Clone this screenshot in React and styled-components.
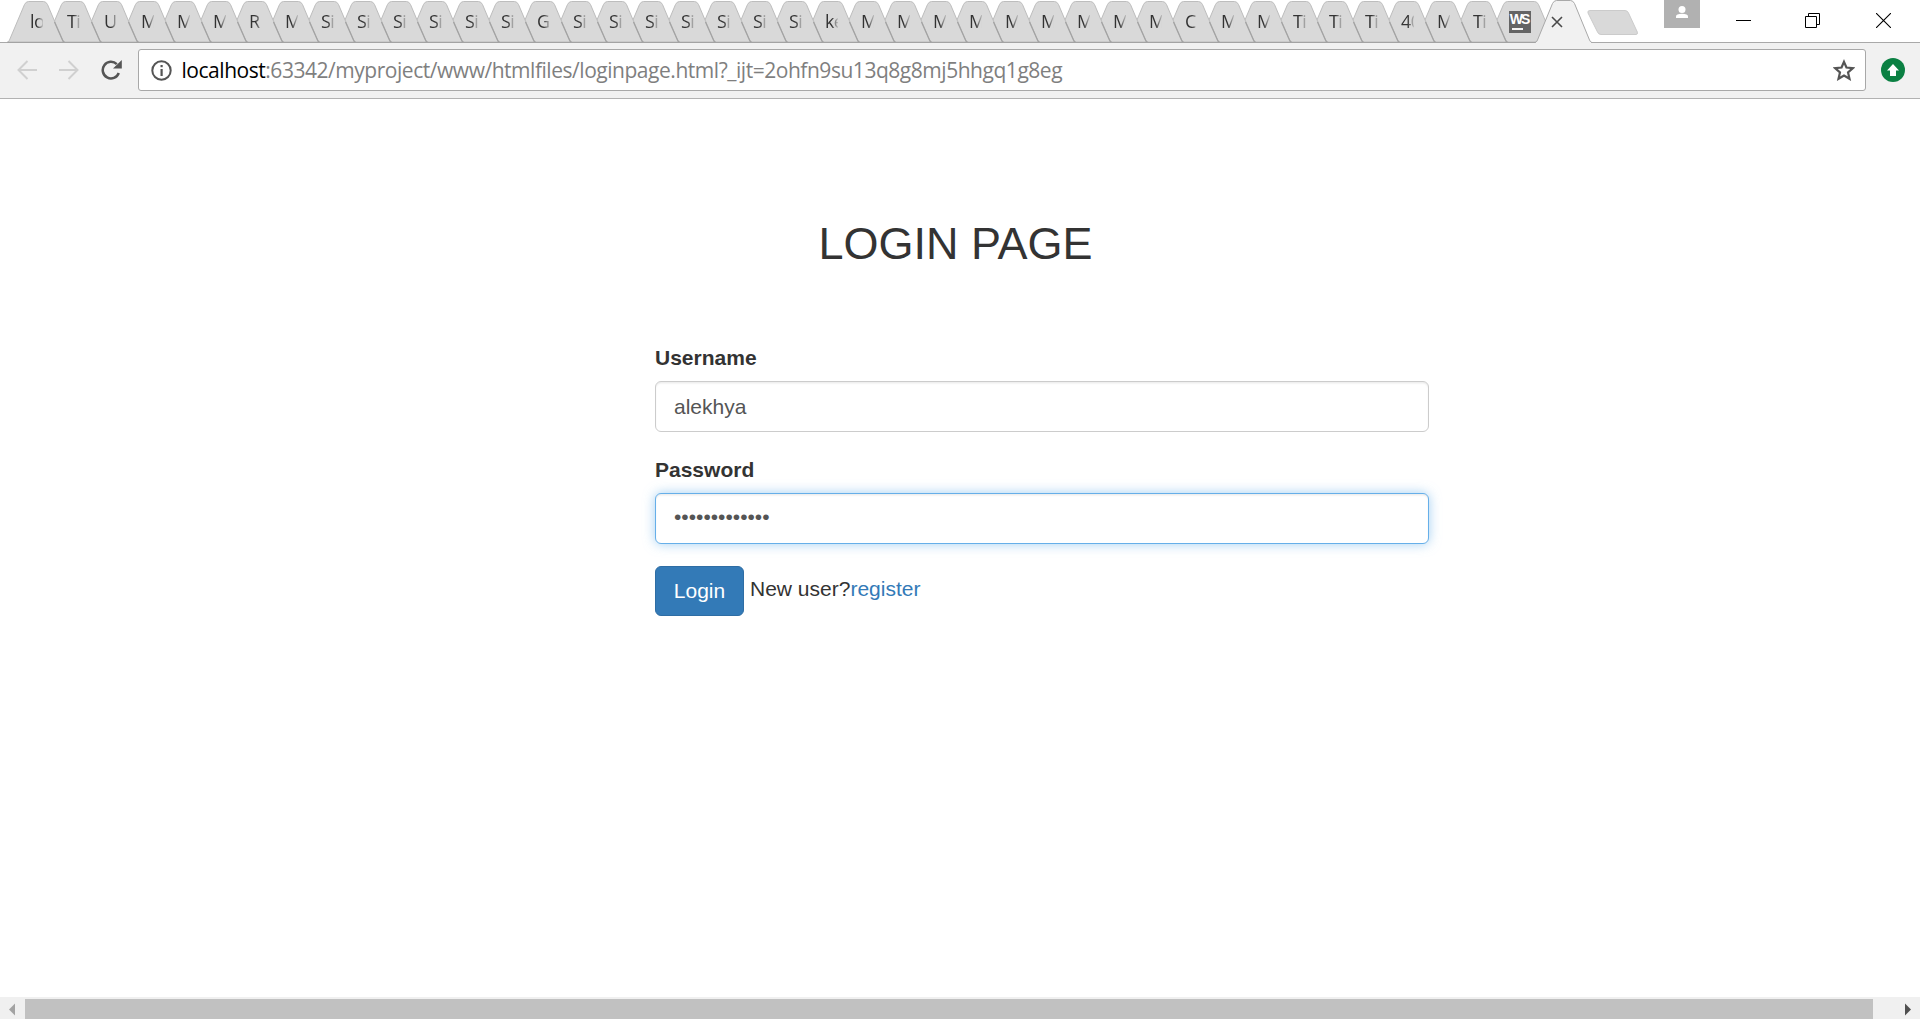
import React from "react";
import styled, { createGlobalStyle } from "styled-components";

const Global = createGlobalStyle`
  * { box-sizing: border-box; }
  html, body { margin: 0; padding: 0; background: #fff; overflow: hidden; }
`;

const Window = styled.div`
  width: 1920px;
  height: 1019px;
  display: flex;
  flex-direction: column;
  background: #fff;
  font-family: "Liberation Sans", Arial, sans-serif;
  font-size: 21px;
  color: #333;
`;

const TitleBar = styled.header`
  height: 43px;
  flex: none;
  display: flex;
  align-items: flex-start;
  border-bottom: 1px solid #a9a9a9;
`;

const TabStrip = styled.div`
  display: flex;
  height: 43px;
  padding-left: 7px;
  flex: none;
`;

const TabBox = styled.div`
  display: grid;
  flex: none;
  width: ${(p) => p.$width}px;
  height: 43px;
  margin-right: ${(p) => p.$pitch - p.$width}px;
  z-index: ${(p) => p.$z};
  position: relative;
  > * { grid-area: 1 / 1; }
`;

const TabLabel = styled.span`
  margin: 9px 0 0 23px;
  width: 13px;
  height: 24px;
  overflow: hidden;
  white-space: nowrap;
  font: 18px/24px "Open Sans", "Noto Sans", sans-serif;
  letter-spacing: -0.6px;
  color: #333;
  mask-image: linear-gradient(90deg, #000 50%, transparent 108%);
`;

const Favicon = styled.span`
  margin: 11px 0 0 23px;
  width: 22px;
  height: 22px;
  background: #646464;
  color: #fff;
  font: bold 14px/16px "Liberation Sans", Arial, sans-serif;
  letter-spacing: -2px;
  text-indent: -2px;
  text-align: center;
  &::after {
    content: "";
    display: block;
    width: 11px;
    height: 2px;
    margin: 1px 0 0 3px;
    background: #f4f4f4;
  }
`;

const TabClose = styled.svg`
  margin: 16px 0 0 16px;
`;

const NewTab = styled.svg`
  flex: none;
  margin: 10px 0 0 -5px;
`;

const WindowControls = styled.div`
  display: flex;
  align-items: flex-start;
  margin-left: auto;
  svg { display: block; }
`;

const Account = styled.div`
  width: 36px;
  height: 28px;
  background: #b1b1b1;
  margin-right: 36px;
`;

const ControlIcon = styled.svg`
  margin: ${(p) => p.$top}px ${(p) => p.$right}px 0 0;
`;

const Toolbar = styled.div`
  height: 56px;
  flex: none;
  display: flex;
  align-items: flex-start;
  padding: 6px 14px 0 17px;
  background: #f1f1f1;
  border-bottom: 1px solid #b2b2b2;
`;

const NavIcon = styled.svg`
  flex: none;
  margin: 11px ${(p) => p.$right}px 0 0;
`;

const AddressBar = styled.div`
  flex: none;
  width: 1728px;
  height: 42px;
  display: flex;
  align-items: center;
  padding: 0 10px 0 12px;
  background: #fff;
  border: 1px solid #a8a8a8;
  border-radius: 3px;
`;

const Url = styled.span`
  margin-left: 9.5px;
  flex: 1;
  font: 21px/40px "Open Sans", "Noto Sans", sans-serif;
  letter-spacing: -0.465px;
  color: #7f7f7f;
  white-space: nowrap;
  b { font-weight: 400; color: #000; }
`;

const UpdateIcon = styled.svg`
  flex: none;
  margin: 9px 0 0 15px;
`;

const Page = styled.main`
  flex: 1;
  display: flex;
  flex-direction: column;
  align-items: flex-start;
  padding: 120px 0 0 655px;
`;

const Heading = styled.h2`
  width: 601px;
  margin: 0 0 74px;
  text-align: center;
  font-size: 45px;
  line-height: 50px;
  font-weight: 400;
  color: #333;
`;

const Field = styled.div`
  display: flex;
  flex-direction: column;
  margin-bottom: ${(p) => p.$gap}px;
`;

const Label = styled.label`
  font-weight: 700;
  line-height: 30px;
  margin-bottom: 8px;
`;

const Input = styled.div`
  width: 774px;
  height: 51px;
  padding: 0 18px;
  line-height: ${(p) => (p.$focus ? 46 : 49)}px;
  color: #555;
  background: #fff;
  border: 1px solid ${(p) => (p.$focus ? "#66afe9" : "#ccc")};
  border-radius: 6px;
  box-shadow: inset 0 1.5px 1.5px rgba(0, 0, 0, 0.075)${(p) => (p.$focus ? ", 0 0 12px rgba(102, 175, 233, 0.6)" : "")};
`;

const Actions = styled.div`
  display: flex;
  align-items: flex-start;
`;

const LoginButton = styled.button`
  width: 89px;
  height: 50px;
  padding: 0;
  border: 1px solid #2e6da4;
  border-radius: 6px;
  background: #337ab7;
  color: #fff;
  font: 21px/48px "Liberation Sans", Arial, sans-serif;
`;

const Prompt = styled.span`
  margin-left: 6px;
  line-height: 46px;
`;

const Link = styled.a`
  color: #337ab7;
`;

const ScrollBar = styled.div`
  height: 22px;
  flex: none;
  display: flex;
  padding-top: 2px;
  background: #f0f0f0;
`;

const ScrollArrow = styled.svg`
  flex: none;
  width: ${(p) => p.$width}px;
  height: 20px;
`;

const ScrollThumb = styled.div`
  width: 1848px;
  height: 20px;
  background: #c1c1c1;
`;

const titles = (
  "lo Ti U M M M R M Si Si Si Si Si Si G Si Si Si Si Si Si Si ke M M M M M M M M M C M M Ti Ti Ti 40 M Ti"
).split(" ");

function TabShape({ width, active }) {
  const y = active ? 0.5 : 1.5;
  const w = width;
  const d = `M0 42.5 Q1.5 42.5 2.5 40 L17.5 ${y + 3} Q19 ${y} 21.5 ${y} H${w - 21.5} Q${w - 19} ${y} ${w - 17.5} ${y + 3} L${w - 2.5} 40 Q${w - 1.5} 42.5 ${w} 42.5`;
  return (
    <svg width={w} height="43">
      <path d={`${d} Z`} fill={active ? "#f1f1f1" : "#d9d9d9"} />
      <path d={d} fill="none" stroke={active ? "#a9a9a9" : "#bdbdbd"} />
      {!active && (
        <path
          d={`M${w - 10.5} 22 L${w - 2.5} 40 Q${w - 1.5} 42.5 ${w} 42.5 H0`}
          fill="none"
          stroke="#a3a3a3"
          strokeWidth="1.3"
        />
      )}
      {active && <path d={`M1 42.5 H${w - 1}`} stroke="#f1f1f1" />}
    </svg>
  );
}

export default function App() {
  return (
    <>
      <Global />
      <Window>
        <TitleBar>
          <TabStrip>
            {titles.map((title, i) => (
              <TabBox key={i} $width={58} $pitch={i < 3 ? 37 : 36} $z={60 - i}>
                <TabShape width={58} />
                <TabLabel>{title}</TabLabel>
              </TabBox>
            ))}
            <TabBox $width={70} $pitch={49} $z={5}>
              <TabShape width={70} />
              <Favicon>WS</Favicon>
            </TabBox>
            <TabBox $width={57} $pitch={57} $z={70}>
              <TabShape width={57} active />
              <TabClose width="12" height="12" viewBox="0 0 12 12">
                <path d="M1 1 L11 11 M11 1 L1 11" stroke="#4a4a4a" strokeWidth="1.6" />
              </TabClose>
            </TabBox>
          </TabStrip>
          <NewTab width="52" height="26" viewBox="0 0 52 26">
            <path
              d="M3 .5 H38 Q40.5 .5 41.5 3 L50.3 22 Q51 24.5 49 24.5 H14 Q11.500 24.500 10.500 22 L1 3 Q.2 .5 3 .5 Z"
              fill="#d9d9d9"
              stroke="#cbcbcb"
            />
          </NewTab>
          <WindowControls>
            <Account>
              <svg width="36" height="28">
                <circle cx="18" cy="9.500" r="3.500" fill="#fff" />
                <path d="M12 18 V16.500 Q12 13.700 18 13.700 Q24 13.700 24 16.500 V18 Z" fill="#fff" />
              </svg>
            </Account>
            <ControlIcon $top={20} $right={54} width="15" height="1">
              <rect width="15" height="1" fill="#000" />
            </ControlIcon>
            <ControlIcon $top={13} $right={56} width="15" height="15" fill="none" stroke="#000">
              <path d="M.5 3.500 H11.500 V14.500 H.5 Z M3.500 3.500 V.5 H14.500 V11.500 H11.500" />
            </ControlIcon>
            <ControlIcon $top={13} $right={29} width="15" height="15" stroke="#000">
              <path d="M0 0 L15 15 M15 0 L0 15" strokeWidth="1.1" />
            </ControlIcon>
          </WindowControls>
        </TitleBar>
        <Toolbar>
          <NavIcon $right={22} width="20" height="20" fill="none" stroke="#d0d0d0" strokeWidth="2">
            <path d="M20 10 H2 M10.500 1 L1.500 10 L10.500 19" />
          </NavIcon>
          <NavIcon $right={22} width="20" height="20" fill="none" stroke="#d0d0d0" strokeWidth="2">
            <path d="M0 10 H18 M9.500 1 L18.500 10 L9.500 19" />
          </NavIcon>
          <NavIcon $right={16} width="21" height="20" viewBox="0 0 21 20">
            <path d="M17.800 13 A8.300 8.300 0 1 1 15.800 4.100" fill="none" stroke="#555" strokeWidth="2.500" />
            <path d="M20.800 0 V8.600 H12 Z" fill="#555" />
          </NavIcon>
          <AddressBar>
            <svg width="21" height="21" viewBox="0 0 21 21">
              <circle cx="10.500" cy="10.500" r="9.200" fill="none" stroke="#555" strokeWidth="2" />
              <rect x="9.500" y="5" width="2.200" height="2.200" fill="#555" />
              <rect x="9.500" y="9" width="2.200" height="7" fill="#555" />
            </svg>
            <Url>
              <b>localhost</b>:63342/myproject/www/htmlfiles/loginpage.html?_ijt=2ohfn9su13q8g8mj5hhgq1g8eg
            </Url>
            <svg width="22" height="22" viewBox="2.200 1.700 18 18">
              <path
                d="M11.200 4 L13.200 8.700 L18.500 9.200 L14.500 12.700 L15.700 17.900 L11.200 15.200 L6.700 17.900 L7.900 12.700 L3.900 9.200 L9.200 8.700 Z"
                fill="none"
                stroke="#555"
                strokeWidth="1.800"
              />
            </svg>
          </AddressBar>
          <UpdateIcon width="24" height="24" viewBox="0 0 24 24">
            <circle cx="12" cy="12" r="12" fill="#0b8043" />
            <path d="M12 6 L18 12.500 H15 V18 H9 V12.500 H6 Z" fill="#fff" />
          </UpdateIcon>
        </Toolbar>
        <Page>
          <Heading>LOGIN PAGE</Heading>
          <Field $gap={23}>
            <Label>Username</Label>
            <Input>alekhya</Input>
          </Field>
          <Field $gap={22}>
            <Label>Password</Label>
            <Input $focus>•••••••••••••</Input>
          </Field>
          <Actions>
            <LoginButton>Login</LoginButton>
            <Prompt>
              New user?<Link>register</Link>
            </Prompt>
          </Actions>
        </Page>
        <ScrollBar>
          <ScrollArrow $width={25}>
            <path d="M15 4.500 V16.500 L9 10.500 Z" fill="#a3a3a3" />
          </ScrollArrow>
          <ScrollThumb />
          <ScrollArrow $width={47}>
            <path d="M32 4.500 V16.500 L38 10.500 Z" fill="#505050" />
          </ScrollArrow>
        </ScrollBar>
      </Window>
    </>
  );
}
